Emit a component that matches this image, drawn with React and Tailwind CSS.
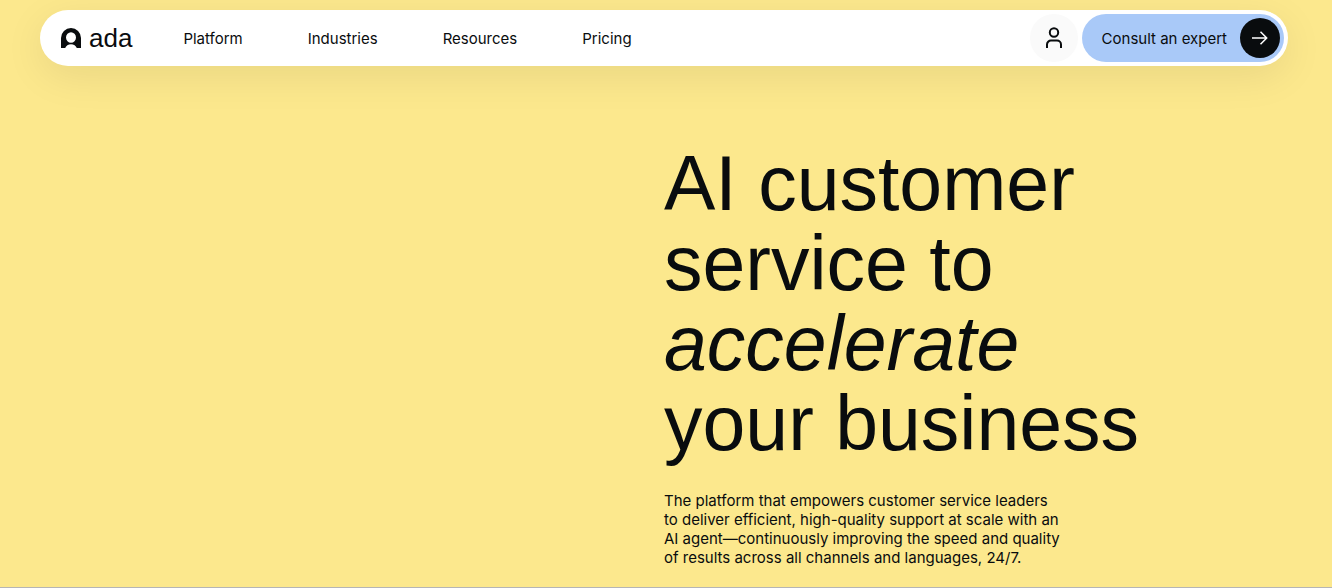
const navItems = ["Platform", "Industries", "Resources", "Pricing"];

function Logo() {
  return (
    <a href="#home" aria-label="ada" className="flex items-center gap-2 text-[#090c0e]">
      <svg viewBox="0 0 20 20" className="h-5 w-5" fill="currentColor" aria-hidden="true">
        <path
          fillRule="evenodd"
          d="M0 20V10a10 10 0 0 1 20 0V20H15.800C14.900 17.700 12.800 16.300 10 16.300S5.100 17.700 4.200 20ZM10 4.300a5 5.200 0 1 0 0 10.400a5 5.200 0 1 0 0-10.400Z"
        />
      </svg>
      <span className="font-['Liberation_Sans',sans-serif] text-[26px] leading-7">ada</span>
    </a>
  );
}

function Header() {
  return (
    <header className="mt-2.5 mr-11 ml-10 flex h-14 items-center justify-between rounded-full bg-white pr-1 pl-[21px] shadow-[0_10px_40px_rgba(0,0,0,0.08)]">
      <div className="flex items-center gap-[51px]">
        <Logo />
        <nav className="flex gap-[65px] pt-0.5">
          {navItems.map((item) => (
            <button key={item} type="button" className="text-[15px] leading-5">
              {item}
            </button>
          ))}
        </nav>
      </div>
      <div className="flex items-center gap-1">
        <button
          type="button"
          aria-label="Account"
          className="flex h-12 w-12 items-center justify-center rounded-full bg-[#fafafa]"
        >
          <svg
            viewBox="0 0 24 24"
            className="h-6 w-6"
            fill="none"
            stroke="currentColor"
            strokeWidth="2"
            aria-hidden="true"
          >
            <circle cx="12" cy="6.500" r="4.200" />
            <path d="M5 22v-3.500a4 4 0 0 1 4-4h6a4 4 0 0 1 4 4V22" />
          </svg>
        </button>
        <a href="#consult" className="flex h-12 items-center gap-[13px] rounded-full bg-[#a9c9f8] pr-1 pl-5">
          <span className="pt-0.5 text-[15px] leading-5">Consult an expert</span>
          <span className="flex h-10 w-10 items-center justify-center rounded-full bg-[#090c0e] text-white">
            <svg
              viewBox="0 0 16 14"
              className="h-3.5 w-4"
              fill="none"
              stroke="currentColor"
              strokeWidth="1.500"
              aria-hidden="true"
            >
              <path d="M0 7h14.500M8.500 0.800 14.700 7 8.500 13.200" />
            </svg>
          </span>
        </a>
      </div>
    </header>
  );
}

export default function App() {
  return (
    <div className="flow-root min-h-screen border-b border-[#b5b5b5] bg-[#fce88d] font-['Inter',sans-serif] text-[#090c0e]">
      <Header />
      <main className="mr-11 ml-10 grid grid-cols-2 pt-[77px] pb-4">
        <section className="col-start-2 flex flex-col gap-7">
          <h1 className="font-['Liberation_Sans',sans-serif] text-[77px] leading-20">
            AI customer
            <br />
            service to
            <br />
            <em>accelerate</em>
            <br />
            your business
          </h1>
          <p className="text-[15px] leading-[19px]">
            The platform that empowers customer service leaders
            <br />
            to deliver efficient, high-quality support at scale with an
            <br />
            AI agent—continuously improving the speed and quality
            <br />
            of results across all channels and languages, 24/7.
          </p>
        </section>
      </main>
    </div>
  );
}
